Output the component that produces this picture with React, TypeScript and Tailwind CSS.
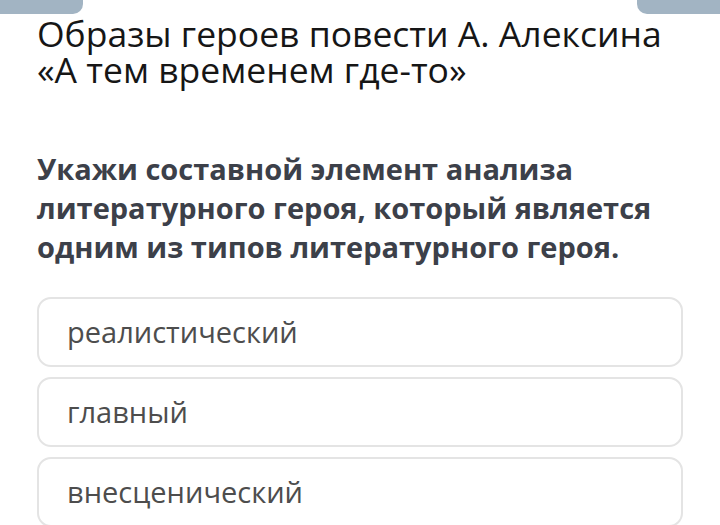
import React from "react";

export default function App() {
  const options = ["реалистический", "главный", "внесценический"];
  return (
    <div className="w-[720px] h-[525px] overflow-hidden bg-white relative" style={{ fontFamily: '"Open Sans", "Noto Sans", sans-serif' }}>
      <div className="absolute left-0 top-0 w-[83px] h-[14px] bg-[#a2b4c3] rounded-br-[10px]" />
      <div className="absolute right-0 top-0 w-[83px] h-[14px] bg-[#a2b4c3] rounded-bl-[10px]" />
      <div className="pt-[15px] px-[37px]">
        <h1 className="text-[35.5px] leading-[36px] text-[#161616] font-normal whitespace-nowrap">
          <div>Образы героев повести А. Алексина</div>
          <div>«А тем временем где-то»</div>
        </h1>
        <p className="mt-[62px] text-[29px] leading-[39px] font-bold text-[#3c4049] w-[640px]">
          Укажи составной элемент анализа литературного героя, который является одним из типов литературного героя.
        </p>
        <div className="mt-[31px] flex flex-col gap-[10px] w-[646px]">
          {options.map((o) => (
            <div key={o} className="h-[70px] border-2 border-[#e4e4e4] rounded-[14px] flex items-center pl-[28px] text-[29px] text-[#4d4d4d]">
              {o}
            </div>
          ))}
        </div>
      </div>
    </div>
  );
}
